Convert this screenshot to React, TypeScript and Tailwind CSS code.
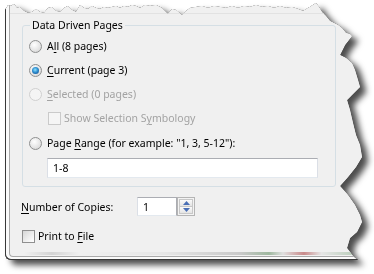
import React from 'react';

const Radio = ({ checked = false, disabled = false }: { checked?: boolean; disabled?: boolean }) => (
  <span
    className={
      disabled
        ? 'flex h-[13px] w-[13px] shrink-0 items-center justify-center rounded-full border border-[#cfcfcf] bg-[#f4f4f4]'
        : 'flex h-[13px] w-[13px] shrink-0 items-center justify-center rounded-full border border-[#8e8f8f] bg-[radial-gradient(circle_at_40%_35%,#ffffff_0%,#e6e6e6_55%,#cfcfcf_100%)]'
    }
  >
    {checked && (
      <span className="h-[7px] w-[7px] rounded-full bg-[radial-gradient(circle_at_45%_40%,#8fe3ff_0%,#2f8fd0_45%,#0b3f7f_100%)]" />
    )}
  </span>
);

const Check = ({ disabled = false }: { disabled?: boolean }) => (
  <span
    className={
      disabled
        ? 'h-[13px] w-[13px] shrink-0 border border-[#cacaca] bg-[#f5f5f5]'
        : 'h-[13px] w-[13px] shrink-0 border border-[#8f8f8f] bg-[linear-gradient(135deg,#d6d6d6_0%,#f0f0f0_60%,#ffffff_100%)]'
    }
  />
);

const App = () => {
  return (
    <div className="h-[274px] w-[374px] overflow-hidden bg-white font-['Noto_Sans','Open_Sans',sans-serif] text-[10.5px] leading-[14px] text-black">
      <div className="pl-[5px] [filter:drop-shadow(0_0_0.5px_rgba(0,0,0,0.9))_drop-shadow(6px_5px_3px_rgba(0,0,0,0.7))]">
        <div className="h-[260px] w-[369px] rounded-bl-[6px] border-b border-l border-[#383838] bg-[#fafafa] pb-[2px] pl-[3px] [clip-path:polygon(0px_10px,3px_5px,6px_6px,9px_4px,12px_8px,15px_7px,19px_11px,23px_13px,27px_12px,31px_9px,35px_12px,39px_13px,43px_8px,47px_7px,51px_11px,55px_12px,59px_8px,63px_6px,67px_10px,71px_12px,75px_5px,79px_8px,83px_9px,87px_6px,91px_8px,95px_9px,99px_7px,103px_8px,107px_7px,111px_6px,115px_8px,119px_6px,123px_7px,127px_5px,131px_6px,135px_8px,140px_5px,145px_6px,151px_5px,157px_8px,163px_14px,167px_9px,171px_10px,177px_15px,181px_11px,185px_8px,191px_7px,197px_6px,203px_8px,209px_6px,215px_7px,221px_8px,227px_6px,233px_8px,239px_6px,245px_7px,251px_5px,257px_7px,263px_6px,269px_8px,275px_6px,281px_8px,287px_7px,293px_9px,298px_11px,303px_8px,308px_5px,311px_3px,314px_7px,317px_12px,321px_16px,325px_21px,329px_23px,333px_25px,337px_28px,341px_33px,345px_34px,347px_36px,340px_45px,335px_55px,341px_58px,347px_63px,350px_70px,353px_80px,355px_87px,347px_95px,342px_100px,345px_110px,348px_123px,351px_135px,355px_145px,357px_157px,351px_167px,343px_177px,335px_186px,343px_195px,350px_205px,355px_215px,357px_222px,352px_232px,345px_238px,342px_248px,348px_256px,353px_260px,0px_260px)]">
          <div className="relative h-full rounded-bl-[4px] border-b border-l border-[#a9a9a9] bg-[#f0f0f0] pt-[18px]">
            <div className="absolute left-0 right-0 top-[13px] h-px bg-[#e2e2e2]" />
            <fieldset className="relative ml-[12px] w-[314px] rounded-[3px] border border-[#d5dfe5] pb-[8px] pl-[6px]">
              <legend className="ml-[1px] px-[2px]">Data Driven Pages</legend>
              <div className="mt-[2px] flex h-[24px] items-center gap-[5px]">
                <Radio />
                <span>
                  A<u className="underline-offset-2">l</u>l (8 pages)
                </span>
              </div>
              <div className="flex h-[24px] items-center gap-[5px]">
                <Radio checked />
                <span>
                  <u className="underline-offset-2">C</u>urrent (page 3)
                </span>
              </div>
              <div className="flex h-[24px] items-center gap-[5px] text-[#a3a3a3]">
                <Radio disabled />
                <span>
                  <u className="underline-offset-2">S</u>elected (0 pages)
                </span>
              </div>
              <div className="flex h-[24px] items-center gap-[3px] pl-[19px] text-[#a3a3a3]">
                <Check disabled />
                <span>
                  Show Selection S<u className="underline-offset-2">y</u>mbology
                </span>
              </div>
              <div className="mt-[1px] flex h-[24px] items-center gap-[5px]">
                <Radio />
                <span>
                  Page <u className="underline-offset-2">R</u>ange (for example: "1, 3, 5-12"):
                </span>
              </div>
              <div className="ml-[18px] mt-[3px] flex h-[20px] w-[271px] items-center border border-[#abadb3] border-l-[#dbdfe6] border-r-[#dbdfe6] border-b-[#e3e9ef] bg-white pl-[5px]">
                1-8
              </div>
            </fieldset>
            <div className="ml-[11px] mt-[10px] flex h-[19px] items-center">
              <span className="w-[116px]">
                <u className="underline-offset-2">N</u>umber of Copies:
              </span>
              <div className="flex h-[19px] w-[40px] items-center border border-[#abadb3] border-l-[#dbdfe6] border-b-[#e3e9ef] bg-white pl-[5px]">
                1
              </div>
              <div className="flex h-[19px] w-[18px] flex-col border border-[#b5b5b5] bg-[#f3f3f3] p-px">
                <span className="flex flex-1 items-center justify-center border border-[#c8c8c8] bg-[linear-gradient(#fbfbfb,#e4e4e4)]">
                  <svg width="7" height="4" viewBox="0 0 7 4">
                    <path d="M3.5 0 L7 4 L0 4 Z" fill="#4a6fb5" />
                  </svg>
                </span>
                <span className="flex flex-1 items-center justify-center border border-t-0 border-[#c8c8c8] bg-[linear-gradient(#fbfbfb,#e4e4e4)]">
                  <svg width="7" height="4" viewBox="0 0 7 4">
                    <path d="M0 0 L7 0 L3.5 4 Z" fill="#4a6fb5" />
                  </svg>
                </span>
              </div>
            </div>
            <div className="ml-[12px] mt-[10px] flex h-[20px] items-center gap-[3px]">
              <Check />
              <span>
                Print to <u className="underline-offset-2">F</u>ile
              </span>
            </div>
            <div className="absolute bottom-[1px] left-[14px] right-0 h-[3px] bg-[linear-gradient(90deg,#f0f0f0_0%,#d4d4d4_8%,#f0f0f0_16%,#e6e6e6_40%,#c9c9c9_62%,#9fb89f_70%,#e0e0e0_74%,#c98a8a_80%,#e6e6e6_85%,#b9cdb9_95%,#f0f0f0_100%)]" />
          </div>
        </div>
      </div>
    </div>
  );
};

export default App;
